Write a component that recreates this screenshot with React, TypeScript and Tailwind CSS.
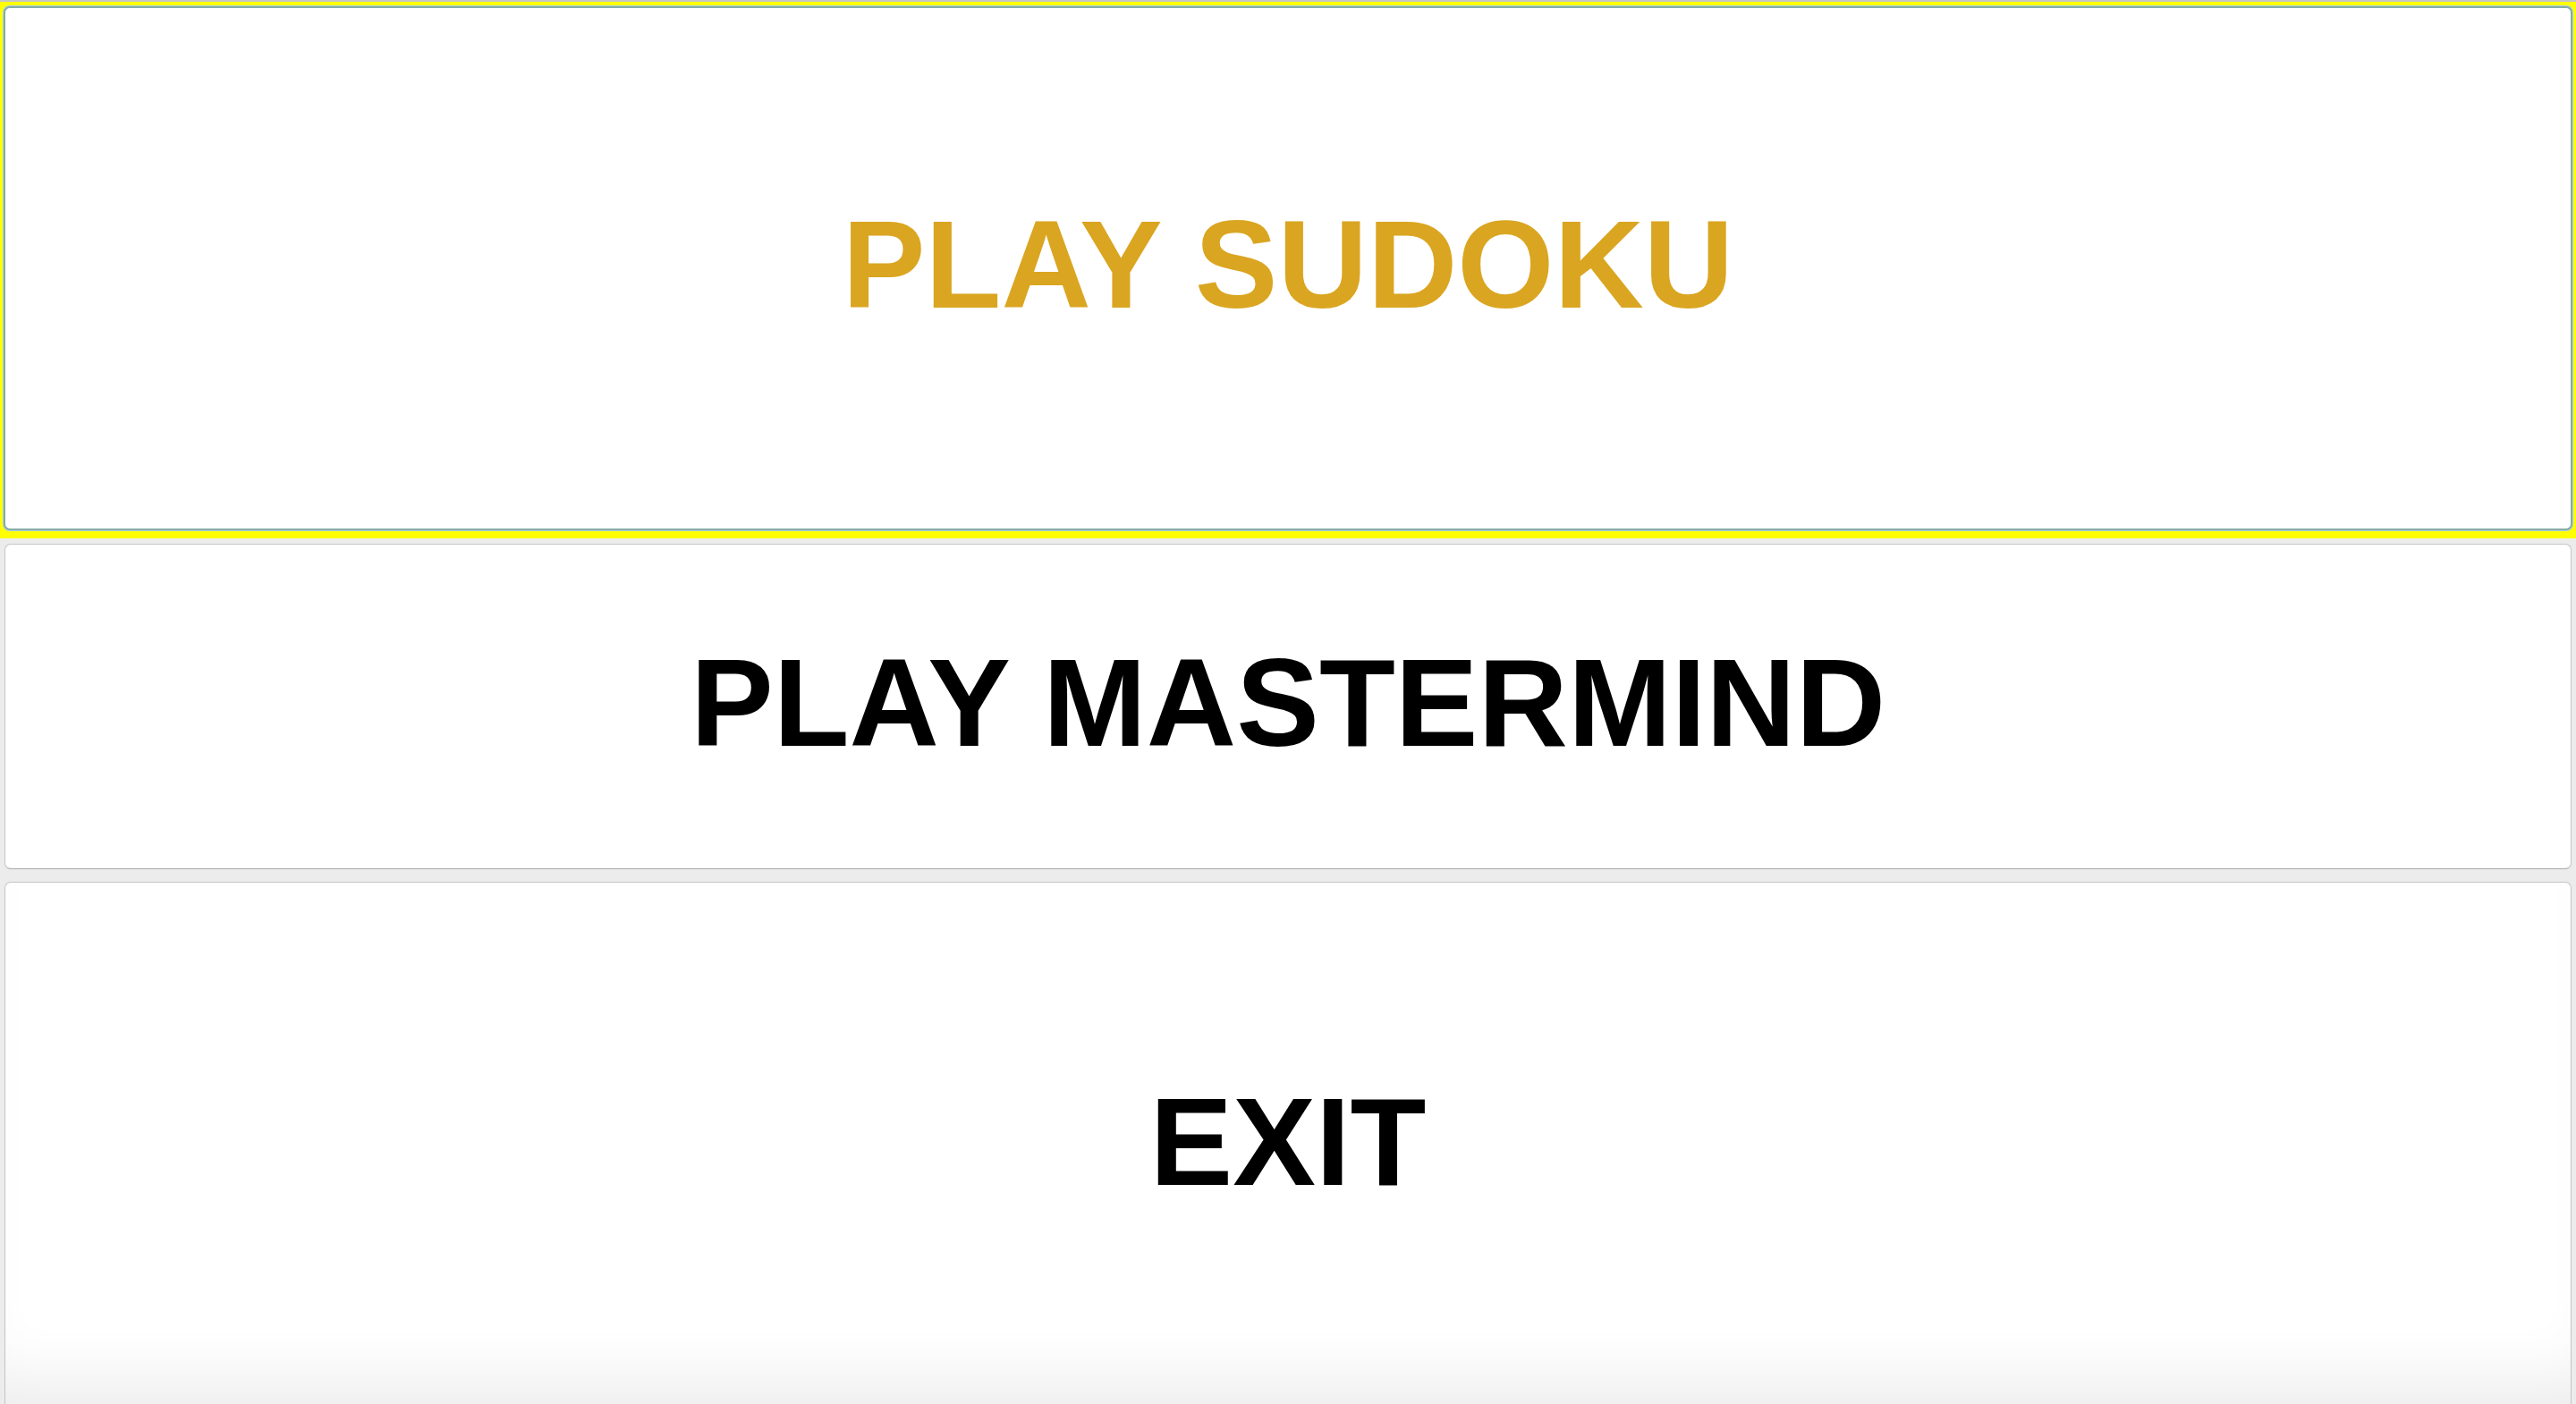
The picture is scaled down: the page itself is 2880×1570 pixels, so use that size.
const labelClass =
  "font-['Liberation_Sans',Arial,sans-serif] text-[139px] font-bold leading-none tracking-normal";

interface IMenuButtonProps {
  label: string;
  className: string;
  textClassName: string;
}

function MenuButton(props: IMenuButtonProps) {
  const {label, className, textClassName} = props;

  return (
    <button type="button" className={`flex w-full items-center justify-center rounded-[7px] ${className}`}>
      <span className={`${labelClass} ${textClassName} pb-[10px]`}>{label}</span>
    </button>
  );
}

export default function App() {
  return (
    <div className="flex h-[1570px] flex-col overflow-hidden border-t-2 border-[#c6c6c6] bg-[#ececec]">
      <div className="bg-[#ffff00] px-[4px] pt-[5px] pb-[9px]">
        <MenuButton
          label="PLAY SUDOKU"
          className="h-[586px] border-2 border-[#86aca4] bg-white shadow-[0_0_0_1px_#a9d0e6]"
          textClassName="text-[#daa520]"
        />
      </div>

      <div className="mt-[6px] px-[5px]">
        <MenuButton
          label="PLAY MASTERMIND"
          className="h-[364px] border border-[#c4c4c4] border-b-[#a8a8a8] bg-white"
          textClassName="text-black"
        />
      </div>

      <div className="mt-[14px] px-[5px]">
        <MenuButton
          label="EXIT"
          className="h-[590px] border border-[#c4c4c4] border-b-[#a8a8a8] bg-white shadow-[inset_0_-70px_70px_-40px_rgba(0,0,0,0.08)]"
          textClassName="text-black"
        />
      </div>
    </div>
  );
}
